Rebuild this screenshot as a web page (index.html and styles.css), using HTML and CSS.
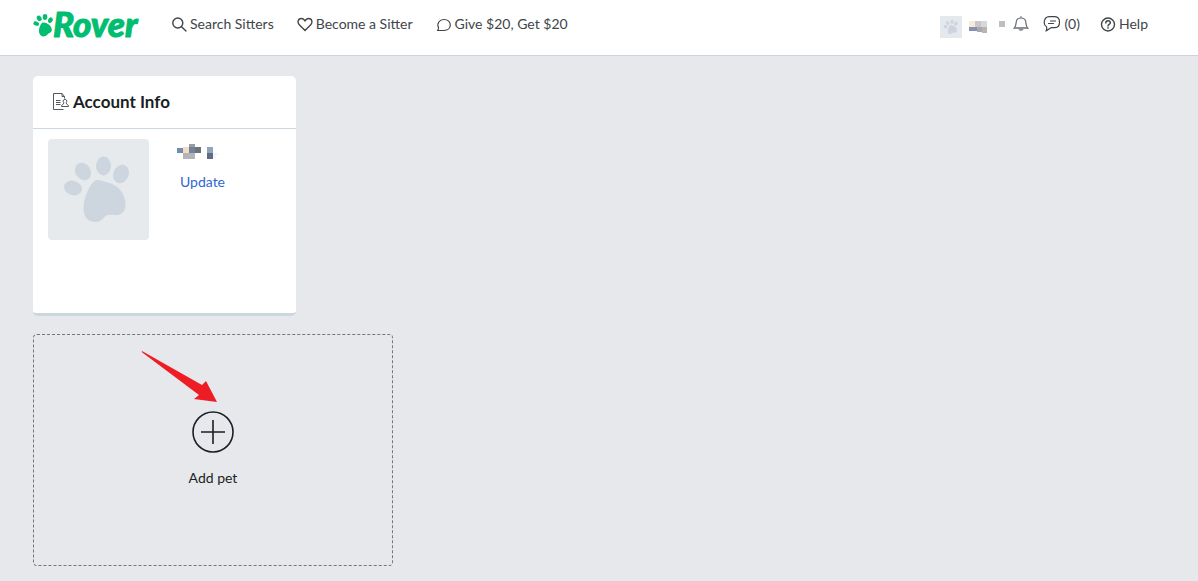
FILE: index.html
```html
<!DOCTYPE html>
<html lang="en">
<head>
<meta charset="utf-8">
<title>Rover – Account</title>
<link rel="stylesheet" href="styles.css">
</head>
<body>
<svg class="sprite" aria-hidden="true">
  <symbol id="paw" viewBox="0 0 101 101">
    <ellipse cx="25" cy="49" rx="9.200" ry="7.200" transform="rotate(18 25 49)"/>
    <ellipse cx="35" cy="32.500" rx="7.600" ry="9.200" transform="rotate(-35 35 32.500)"/>
    <ellipse cx="55.500" cy="27" rx="7.500" ry="9.400" transform="rotate(3 55.500 27)"/>
    <ellipse cx="73" cy="35" rx="7.600" ry="9.600" transform="rotate(27 73 35)"/>
    <path d="M46.500 42C49 39.500 54 42.500 60 43.500C70 46 77.500 54 77.500 66C77.500 73 73 76.500 67 76C62 75.500 59 75 56 78.500C53 82 50 83.500 46 83C38 82 35.500 76 35.500 68C36 57 42 46 46.500 42Z"/>
  </symbol>
</svg>
<header class="topbar">
  <a class="logo" href="#" aria-label="Rover home">
    <svg width="108" height="42" viewBox="0 0 108 42">
      <g transform="translate(0 12)">
        <ellipse cx="3.300" cy="8.600" rx="2.900" ry="2.100" transform="rotate(20 3.300 8.600)"/>
        <ellipse cx="6.200" cy="3.300" rx="2.300" ry="2.900" transform="rotate(-30 6.200 3.300)"/>
        <ellipse cx="12" cy="2" rx="2.300" ry="3"/>
        <ellipse cx="17.400" cy="5.200" rx="2.200" ry="2.900" transform="rotate(30 17.400 5.200)"/>
        <path d="M10 7.500C13 7 18.500 10 18.800 14.500C19 17.500 16.500 17.500 14.500 19.500C11.500 23 6.500 21.500 6 17C5.800 12.500 8 8 10 7.500Z"/>
      </g>
      <text class="wordmark" x="20" y="34">Rover</text>
    </svg>
  </a>
  <nav class="links">
    <a href="#"><svg class="icon" width="16" height="16" viewBox="0 0 16 16"><circle cx="6.800" cy="7" r="5"/><path d="M10.500 10.700L15 15"/></svg>Search Sitters</a>
    <a href="#"><svg class="icon" width="16" height="16" viewBox="0 0 16 16"><path d="M8 14.500L2.500 9C0 6.500 1 2.500 4.200 2.500C6 2.500 7.400 3.700 8 5C8.600 3.700 10 2.500 11.800 2.500C15 2.500 16 6.500 13.500 9Z"/></svg>Become a Sitter</a>
    <a href="#"><svg class="icon thin" width="16" height="16" viewBox="0 0 16 16"><path d="M1.500 14.500C2.500 13.500 2.800 12.800 2.500 11.500C.5 7.500 3.500 3.500 8 3.500C12 3.500 14.300 6 14.300 9C14.300 12 12 14.500 8 14.500Z"/></svg>Give $20, Get $20</a>
  </nav>
  <div class="tools">
    <svg class="avatar-small" width="22" height="22" viewBox="0 0 101 101"><use href="#paw"/></svg>
    <svg class="name-small" width="18" height="12" viewBox="0 0 18 12" aria-hidden="true"><path fill="#f5eadb" d="M0 0h6v6H0z"/><path fill="#cfc5c6" d="M6 0h6v6H6z"/><path fill="#d2dadf" d="M12 0h6v6h-6z"/><path fill="#8392b2" d="M0 6h8v4H0z"/><path fill="#a7a7ae" d="M8 6h5v5H8z"/><path fill="#b9b5ad" d="M13 6h5v6h-5z"/></svg>
    <span class="dot"></span>
    <button class="bell" aria-label="Notifications"><svg class="icon thin" width="16" height="18" viewBox="0 0 16 18"><path d="M1 13.500C3.200 11 3 9.500 3.200 7C3.500 4.200 5 3 8 3C11 3 12.500 4.200 12.800 7C13 9.500 12.800 11 15 13.500M8 1.500V3"/><path class="bell-base" d="M2 12H14L15 14H10.500C10 16.500 6 16.500 5.500 14H1Z"/></svg></button>
    <a class="inbox" href="#"><svg class="icon thin" width="18" height="18" viewBox="0 0 18 18"><path d="M6 1.700H12C18 2 18 12.500 12 12.700H8L3 16C4 14 4 13 3.500 11.800C-.5 9 1 2 6 1.700ZM7.500 6H12.500M5.500 8.500H10.500"/></svg>(0)</a>
    <a class="help" href="#"><svg class="icon" width="16" height="16" viewBox="0 0 16 16"><circle cx="8" cy="8.500" r="6.500"/><path d="M5.800 7C5.800 4 10.300 4.200 10.300 6.800C10.300 8.500 8 8.300 8 10.100M8 11.800v.4"/></svg>Help</a>
  </div>
</header>
<main class="content">
  <section class="card">
    <h2 class="card-title"><svg class="doc" width="18" height="18" viewBox="0 0 18 18"><path d="M12.500 5.500V3.500L10 .5H1.500V16.500H11.500M10 .5V3.500H12.500M4 7.500H8.500M4 9.500H8.500M4 11.500H8.500"/><path d="M11.700 9.500a1.800 1.900 0 1 1 2.600 0L14.500 11L16.500 12.500V13.500H9.500V12.500L11.500 11Z"/></svg>Account Info</h2>
    <div class="profile">
      <svg class="avatar" width="101" height="101" viewBox="0 0 101 101"><use href="#paw"/></svg>
      <div class="details">
        <svg width="44" height="16" viewBox="0 0 44 16" aria-hidden="true"><path fill="#708fac" d="M0 4h6v5H0z"/><path fill="#f4dcc4" d="M6 3h6v6H6z"/><path fill="#999da0" d="M12 0h6v3h-6z"/><path fill="#70829f" d="M12 3h6v6h-6z"/><path fill="#6d7478" d="M18 3h6v6h-6z"/><path fill="#b5b5b8" d="M6 9h12v6H6z"/><path fill="#91a5be" d="M30 3h6v6h-6z"/><path fill="#646b80" d="M30 9h6v6h-6z"/><path fill="#f0f8ff" d="M36 9h6l-4 5h-2z"/></svg>
        <a class="update" href="#">Update</a>
      </div>
    </div>
  </section>
  <button class="add-pet">
    <svg class="plus" width="42" height="42" viewBox="0 0 42 42"><circle cx="21" cy="21" r="20"/><path d="M21 9V33M9 21H33"/></svg>
    <span>Add pet</span>
    <svg class="arrow" width="78" height="54" viewBox="0 0 78 54" aria-hidden="true"><path d="M1 1Q0 2 2 3L58 45L53 49L76 52L65 31L61 35Z"/></svg>
  </button>
</main>
</body>
</html>
```

FILE: styles.css
```css
* { box-sizing: border-box; }
body {
  margin: 0;
  min-height: 100vh;
  background: #e6e8ec;
  color: #1b1f23;
  font: 14px/20px Lato, sans-serif;
}
a { color: inherit; text-decoration: none; }
button { padding: 0; border: 0; background: none; color: inherit; font: inherit; }
svg { display: block; flex: none; }
.sprite { position: absolute; width: 0; height: 0; }
.icon { fill: none; stroke: #404549; stroke-width: 1.4; stroke-linecap: round; stroke-linejoin: round; }
.thin { stroke-width: 1.2; }

.topbar {
  display: flex;
  align-items: center;
  height: 56px;
  padding: 0 50px 7px 33px;
  background: #fff;
  border-bottom: 1px solid #cbd3dc;
  color: #404549;
}
.logo { margin-right: 30px; fill: #00bd70; }
.wordmark {
  font: italic 900 35px Lato, sans-serif;
  stroke: #00bd70;
  stroke-width: 1;
  stroke-linejoin: round;
}
.links { display: flex; gap: 23px; }
.links a, .inbox, .help { display: flex; align-items: center; gap: 3px; }
.tools { display: flex; align-items: center; margin-left: auto; }
.avatar-small { margin: 5px 7px 0 0; background: #e4e9ed; fill: #ccd5dd; }
.name-small { margin-top: 5px; }
.dot { width: 6px; height: 6px; margin: 0 8px 0 12px; background: #bfbfc2; }
.bell .icon { stroke: #666b70; }
.bell .bell-base { fill: #8b9297; stroke: none; }
.inbox { margin: 0 20px 0 14px; }

.content { padding: 20px 33px; }
.card {
  width: 263px;
  min-height: 240px;
  margin-bottom: 18px;
  background: #fff;
  border-bottom: 3px solid #cbd6de;
  border-radius: 5px;
}
.card-title {
  display: flex;
  align-items: center;
  gap: 3px;
  height: 53px;
  margin: 0;
  padding: 0 19px;
  border-bottom: 1px solid #cbd6de;
  font-size: 17px;
  font-weight: 700;
}
.doc { fill: none; stroke: #555a60; stroke-width: 1; }
.profile { display: flex; gap: 28px; padding: 10px 15px; }
.avatar { background: #e6eaed; fill: #cdd6de; border-radius: 4px; }
.details { padding-top: 5px; }
.update { display: block; margin: 12px 0 0 3px; color: #2e67d1; }

.add-pet {
  position: relative;
  display: flex;
  flex-direction: column;
  align-items: center;
  justify-content: center;
  gap: 15px;
  width: 360px;
  height: 232px;
  padding-bottom: 2px;
  border: 1px dashed #74787c;
  border-radius: 4px;
}
.plus { fill: none; stroke: #1b1f23; stroke-width: 1.6; }
.arrow { position: absolute; left: 107px; top: 15px; fill: #ee1c25; }
```
